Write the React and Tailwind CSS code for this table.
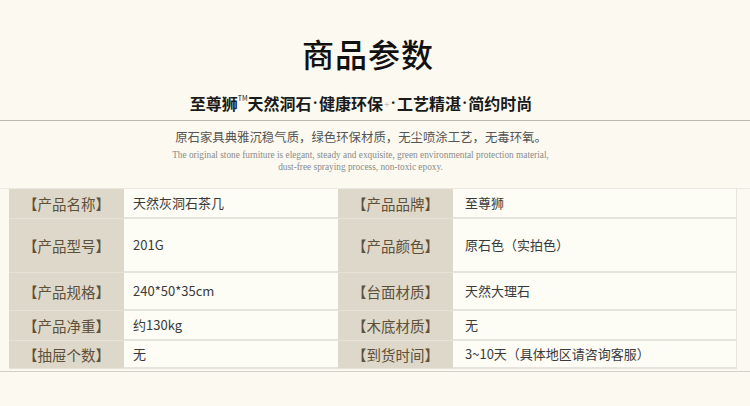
import React from "react";

const rows = [
  { h: "h-[30px]", l1: "【产品名称】", v1: "天然灰洞石茶几", l2: "【产品品牌】", v2: "至尊狮" },
  { h: "h-[54px]", l1: "【产品型号】", v1: "201G", l2: "【产品颜色】", v2: "原石色（实拍色）" },
  { h: "h-[38px]", l1: "【产品规格】", v1: "240*50*35cm", l2: "【台面材质】", v2: "天然大理石" },
  { h: "h-[30px]", l1: "【产品净重】", v1: "约130kg", l2: "【木底材质】", v2: "无" },
  { h: "h-[28px]", l1: "【抽屉个数】", v1: "无", l2: "【到货时间】", v2: "3~10天（具体地区请咨询客服）" },
];

const cjk = { fontFamily: '"Noto Sans CJK SC", "Noto Sans", sans-serif' };
const serif = { fontFamily: '"Liberation Serif", "Noto Sans CJK SC", serif' };

function Dot() {
  return (
    <span className="mx-[1px] font-bold" style={serif}>
      ·
    </span>
  );
}

export default function App() {
  return (
    <div className="w-[750px] h-[406px] bg-[#fcfaf0] overflow-hidden" style={cjk}>
      <div className="pt-[35px] pr-[14px] text-center text-[32px] leading-[36px] font-medium text-[#111] tracking-[1px]">
        商品参数
      </div>
      <div className="mt-[22px] pr-[28px] h-[20px] flex items-center justify-center text-[16px] leading-[20px] font-bold text-[#1a1a1a]">
        <span>至尊狮</span>
        <span className="text-[7px] leading-none self-start mt-[2px] font-normal">TM</span>
        <span>天然洞石</span>
        <Dot />
        <span>健康环保</span>
        <span className="text-[10px] leading-none font-normal text-[#a8a8a8] ml-[1px] mt-[4px]" style={serif}>+</span>
        <Dot />
        <span>工艺精湛</span>
        <Dot />
        <span>简约时尚</span>
      </div>
      <div className="mt-[7px] h-px bg-[#bdb9b1]" />
      <div className="mt-[7px] pr-[28px] text-center text-[12.4px] leading-[18px] text-[#555]">
        原石家具典雅沉稳气质，绿色环保材质，无尘喷涂工艺，无毒环氧。
      </div>
      <div className="mt-[3px] pr-[29px] text-center text-[9.3px] leading-[12px] text-[#8a8a8a]" style={serif}>
        <div>The original stone furniture is elegant, steady and exquisite, green environmental protection material,</div>
        <div>dust-free spraying process, non-toxic epoxy.</div>
      </div>
      <div className="mt-[15px] border-t border-[#ebe8e1]">
        <div className="ml-[9px] w-[728px]">
          {rows.map((r, i) => (
            <div key={i} className={`flex ${r.h}`}>
              <div className="w-[115px] bg-[#ddd8ca] border-b border-[#e6e2d7] flex items-center justify-center text-[14.5px] text-[#5f5039]">
                {r.l1}
              </div>
              <div className="w-[214px] bg-[#fdfcf5] border-b-2 border-[#e6e4de] flex items-center pl-[9px] text-[13px] text-[#3a3a3a]">
                {r.v1}
              </div>
              <div className="w-[115px] bg-[#ddd8ca] border-b border-[#e6e2d7] flex items-center justify-center text-[14.5px] text-[#5f5039]">
                {r.l2}
              </div>
              <div className="w-[284px] bg-[#fdfcf5] border-b-2 border-r border-[#e6e4de] flex items-center pl-[12px] text-[13px] text-[#3a3a3a]">
                {r.v2}
              </div>
            </div>
          ))}
        </div>
      </div>
      <div className="mt-[2px] h-px bg-[#d2cfc8]" />
    </div>
  );
}
